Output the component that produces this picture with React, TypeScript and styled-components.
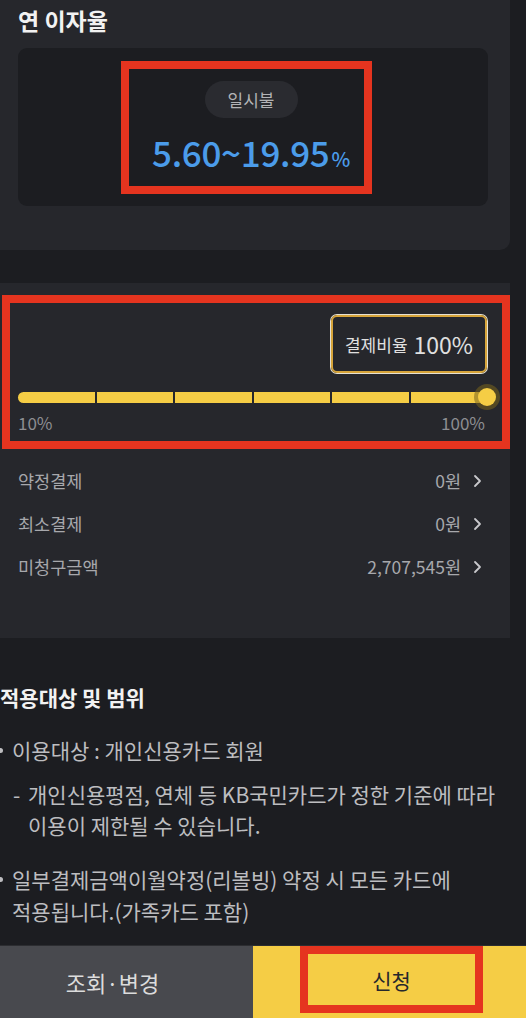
import React from 'react';
import styled, { createGlobalStyle } from 'styled-components';

const GlobalStyle = createGlobalStyle`
  html, body {
    margin: 0;
    padding: 0;
    background: #1c1d21;
  }
  body {
    font-family: "Noto Sans CJK KR", "Noto Sans", sans-serif;
    width: 526px;
    height: 1018px;
    overflow: hidden;
  }
`;

const Page = styled.div`
  width: 526px;
  height: 1018px;
  display: flex;
  flex-direction: column;
  background: #1c1d21;
`;

const Card = styled.section<{ $height: number; $radius?: boolean }>`
  width: 510px;
  height: ${(p) => p.$height}px;
  box-sizing: border-box;
  background: #26272c;
  border-bottom-right-radius: ${(p) => (p.$radius ? '10px' : '0')};
  display: flex;
  flex-direction: column;
`;

const CardTitle = styled.h2`
  margin: 0;
  padding: 4px 0 0 18px;
  font-size: 23px;
  line-height: 32px;
  font-weight: 700;
  color: #f2f2f2;
`;

const RateBox = styled.div`
  margin: 12px 22px 0 18px;
  height: 158px;
  background: #1c1d21;
  border-radius: 9px;
  display: flex;
  align-items: center;
  justify-content: center;
`;

const Highlight = styled.div<{ $w: number; $h: number }>`
  width: ${(p) => p.$w}px;
  height: ${(p) => p.$h}px;
  box-sizing: border-box;
  border: 8px solid #e5341f;
`;

const RateInner = styled(Highlight)`
  margin-right: 14px;
  display: flex;
  flex-direction: column;
  align-items: center;
  padding: 12px 0 0 10px;
`;

const Pill = styled.div`
  width: 93px;
  height: 37px;
  border-radius: 19px;
  background: #2a2b30;
  color: #b3b3b6;
  font-size: 17px;
  display: flex;
  align-items: center;
  justify-content: center;
`;

const Rate = styled.div`
  margin-top: 12px;
  color: #4b9cea;
  font-size: 35px;
  font-weight: 500;
  line-height: 44px;
  letter-spacing: -0.3px;
  white-space: nowrap;
  small {
    font-size: 20px;
    margin-left: 2px;
  }
`;

const Gap = styled.div<{ $h: number }>`
  height: ${(p) => p.$h}px;
  flex-shrink: 0;
`;

const SliderFrame = styled(Highlight)`
  margin: 12px 0 0 2px;
  padding: 12px 15px 0 8px;
  display: flex;
  flex-direction: column;
`;

const Tooltip = styled.div`
  align-self: flex-end;
  width: 156px;
  height: 58px;
  box-sizing: border-box;
  border: 2px solid #d6a43a;
  box-shadow: 0 0 0 1px #e6e1d2;
  border-radius: 6px;
  display: flex;
  align-items: center;
  justify-content: center;
  gap: 6px;
  color: #e0e0e0;
  font-size: 17px;
  b {
    font-weight: 400;
    font-size: 23px;
  }
`;

const Track = styled.div`
  margin-top: 18px;
  display: flex;
  align-items: center;
  gap: 2px;
  position: relative;
  height: 12px;
`;

const Segment = styled.div<{ $first?: boolean }>`
  flex: 1;
  height: 11px;
  background: #f5cd45;
  border-radius: ${(p) => (p.$first ? '6px 0 0 6px' : '0')};
`;

const Thumb = styled.div`
  position: absolute;
  right: -9px;
  top: 50%;
  width: 18px;
  height: 18px;
  margin-top: -9px;
  border-radius: 50%;
  background: #f5cd45;
  box-shadow: 0 0 0 4px rgba(120, 100, 30, 0.55);
`;

const Scale = styled.div`
  margin-top: 8px;
  display: flex;
  justify-content: space-between;
  color: #8d8e92;
  font-size: 17px;
  line-height: 24px;
  padding-right: 2px;
`;

const Rows = styled.div`
  margin-top: 20px;
  display: flex;
  flex-direction: column;
  gap: 19px;
  padding: 0 28px 0 18px;
`;

const Row = styled.div`
  display: flex;
  justify-content: space-between;
  align-items: center;
  color: #a7a8ac;
  font-size: 17.5px;
  line-height: 24px;
`;

const Value = styled.span`
  display: flex;
  align-items: center;
  gap: 12px;
`;

const Chevron = () => (
  <svg width="9" height="14" viewBox="0 0 9 14">
    <path d="M2 2l5 5-5 5" stroke="#c8c8cc" strokeWidth="1.8" fill="none" strokeLinecap="round" strokeLinejoin="round" />
  </svg>
);

const Info = styled.section`
  color: #bdbdc0;
  white-space: nowrap;
`;

const InfoTitle = styled.h3`
  margin: 0;
  font-size: 21px;
  line-height: 30px;
  font-weight: 700;
  color: #f2f2f2;
`;

const Bullet = styled.div`
  margin-top: 22px;
  position: relative;
  padding-left: 12px;
  font-size: 21px;
  line-height: 32px;
  &::before {
    content: '';
    position: absolute;
    left: -2px;
    top: 14px;
    width: 5px;
    height: 5px;
    border-radius: 50%;
    background: #bdbdc0;
  }
`;

const Sub = styled.div`
  margin-top: 13px;
  position: relative;
  padding-left: 28px;
  font-size: 21px;
  line-height: 31px;
  &::before {
    content: '-';
    position: absolute;
    left: 13px;
    top: 0;
  }
`;

const BottomBar = styled.div`
  margin-top: auto;
  height: 72px;
  display: flex;
  border-top: 1px solid #2c2d31;
`;

const BarButton = styled.button<{ $primary?: boolean }>`
  border: none;
  margin: 0;
  padding: ${(p) => (p.$primary ? '0 0 0 47px' : '0 28px 0 0')};
  width: ${(p) => (p.$primary ? '273px' : '253px')};
  background: ${(p) => (p.$primary ? '#f5cd45' : '#48494e')};
  color: ${(p) => (p.$primary ? '#26272c' : '#dcdcdc')};
  font-family: inherit;
  font-size: 22px;
  display: flex;
  align-items: center;
  justify-content: ${(p) => (p.$primary ? 'flex-start' : 'center')};
`;

const ApplyMark = styled(Highlight)`
  margin: -1px 0 5px 0;
  display: flex;
  align-items: center;
  justify-content: center;
  padding-top: 2px;
  font-size: 21px;
`;

export default function App() {
  return (
    <>
      <GlobalStyle />
      <Page>
        <Card $height={250} $radius>
          <CardTitle>연 이자율</CardTitle>
          <RateBox>
            <RateInner $w={251} $h={133}>
              <Pill>일시불</Pill>
              <Rate>
                5.60~19.95<small>%</small>
              </Rate>
            </RateInner>
          </RateBox>
        </Card>
        <Gap $h={33} />
        <Card $height={355}>
          <SliderFrame $w={508} $h={154}>
            <Tooltip>
              결제비율 <b>100%</b>
            </Tooltip>
            <Track>
              {[0, 1, 2, 3, 4, 5].map((i) => (
                <Segment key={i} $first={i === 0} />
              ))}
              <Thumb />
            </Track>
            <Scale>
              <span>10%</span>
              <span>100%</span>
            </Scale>
          </SliderFrame>
          <Rows>
            <Row>
              <span>약정결제</span>
              <Value>
                0원 <Chevron />
              </Value>
            </Row>
            <Row>
              <span>최소결제</span>
              <Value>
                0원 <Chevron />
              </Value>
            </Row>
            <Row>
              <span>미청구금액</span>
              <Value>
                2,707,545원 <Chevron />
              </Value>
            </Row>
          </Rows>
        </Card>
        <Gap $h={44} />
        <Info>
          <InfoTitle>적용대상 및 범위</InfoTitle>
          <Bullet>이용대상 : 개인신용카드 회원</Bullet>
          <Sub>
            개인신용평점, 연체 등 KB국민카드가 정한 기준에 따라
            <br />
            이용이 제한될 수 있습니다.
          </Sub>
          <Bullet>
            일부결제금액이월약정(리볼빙) 약정 시 모든 카드에
            <br />
            적용됩니다.(가족카드 포함)
          </Bullet>
        </Info>
        <BottomBar>
          <BarButton>조회·변경</BarButton>
          <BarButton $primary>
            <ApplyMark $w={183} $h={67}>신청</ApplyMark>
          </BarButton>
        </BottomBar>
      </Page>
    </>
  );
}
